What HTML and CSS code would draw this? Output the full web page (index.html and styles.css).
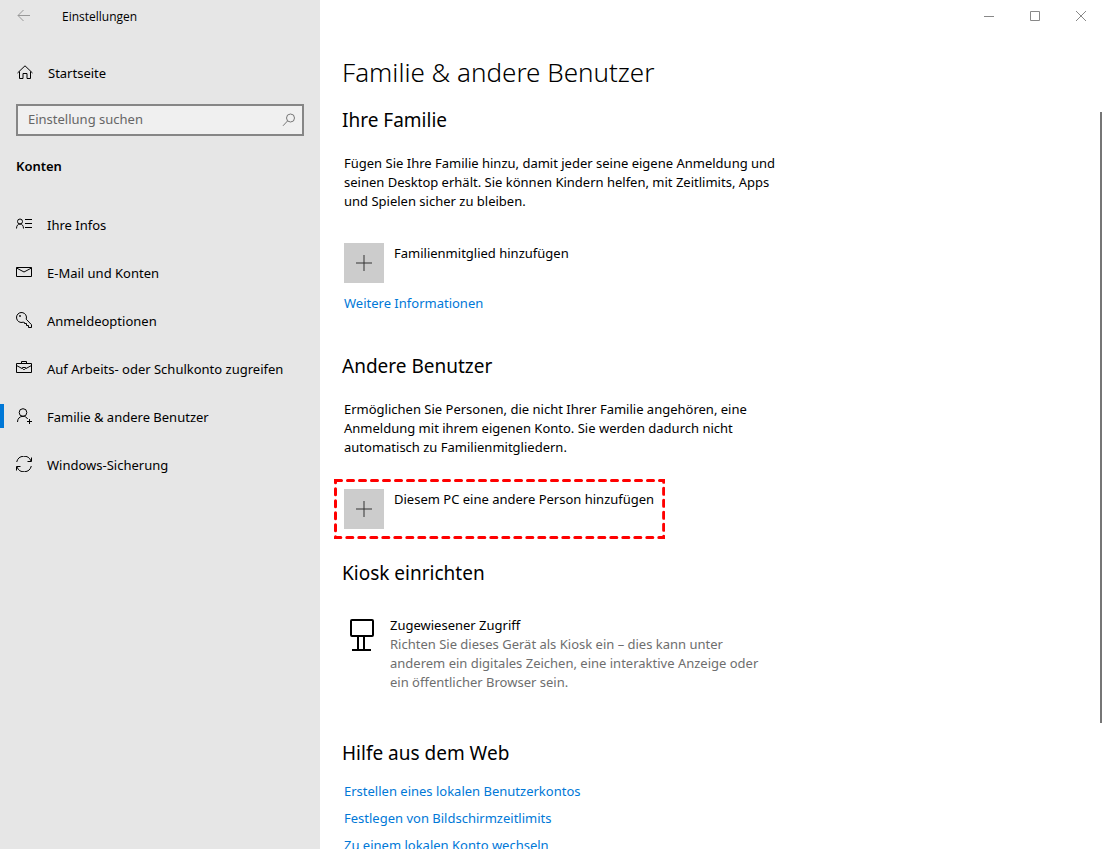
FILE: index.html
```html
<!DOCTYPE html>
<html lang="de">
  <head>
    <meta charset="UTF-8" />
    <meta name="viewport" content="width=device-width, initial-scale=1.0" />
    <title>Einstellungen</title>
    <link rel="stylesheet" href="styles.css">
  </head>
  <body>
    <div class="window">
      <aside class="sidebar">
        <header class="titlebar">
          <button class="back" aria-label="Zurück">
            <svg width="14" height="14" viewBox="0 0 14 14"><path d="M13 6.500H1M6.500 1L1 6.500 6.500 12" /></svg>
          </button>
          <span class="app-name">Einstellungen</span>
        </header>

        <a class="home" href="#">
          <svg class="icon" width="18" height="18" viewBox="0 0 18 18"><path d="M1.500 9L9 1.800 16.500 9M3.500 7.500v7h3.500v-5h4v5h3.500v-7" /></svg>
          Startseite
        </a>

        <form class="search">
          <input class="search-input" type="search" aria-label="Einstellung suchen" placeholder="Einstellung suchen">
          <button class="search-button" type="button" aria-label="Suchen">
            <svg width="14" height="14" viewBox="0 0 14 14"><circle cx="8.500" cy="5" r="4" /><path d="M5.600 7.900L1 12.800" /></svg>
          </button>
        </form>

        <h2 class="category">Konten</h2>

        <nav class="menu">
          <a class="menu-item" href="#">
            <svg class="icon" width="16" height="16" viewBox="0 0 16 16"><circle cx="4" cy="5.500" r="2.500" /><path d="M.5 12.500C.5 9.500 2 8 4 8s3.500 1.500 3.500 4.500M9 3.500h7M9 7.500h7M9 11.500h7" /></svg>
            <span>Ihre Infos</span>
          </a>
          <a class="menu-item" href="#">
            <svg class="icon" width="16" height="16" viewBox="0 0 16 16"><path d="M.5 3.500h15v9H.5zM.5 4L8 8l7.500-4" /></svg>
            <span>E-Mail und Konten</span>
          </a>
          <a class="menu-item" href="#">
            <svg class="icon" width="16" height="16" viewBox="0 0 16 16"><path d="M10.200 7.200a5 5 0 1 0-3 3l1.300.3v1h2v2h2v2h3v-2.800z" /><circle class="dot" cx="4" cy="4" r=".9" /></svg>
            <span>Anmeldeoptionen</span>
          </a>
          <a class="menu-item" href="#">
            <svg class="icon" width="16" height="16" viewBox="0 0 16 16"><path d="M.5 3.500h15v9H.5zM5.500 3.500v-2h5v2M.5 5.500L6 8.500M15.500 5.500L10 8.500M6.500 7.500h3v1l-1 1h-1l-1-1z" /></svg>
            <span>Auf Arbeits- oder Schulkonto zugreifen</span>
          </a>
          <a class="menu-item active" href="#">
            <svg class="icon" width="16" height="16" viewBox="0 0 16 16"><circle cx="7" cy="4.500" r="3.800" /><path d="M1.500 14c0-3.500 2.300-5.700 5.500-5.700 2.200 0 3.800 1 4.600 2.700M13.500 11v5M11 13.500h5" /></svg>
            <span>Familie &amp; andere Benutzer</span>
          </a>
          <a class="menu-item" href="#">
            <svg class="icon" width="16" height="16" viewBox="0 0 16 16"><path d="M.7 6A7.500 7.500 0 0 1 15 5M15.500 1.500v4h-4M15.300 10A7.500 7.500 0 0 1 1 11M.5 14.500v-4h4" /></svg>
            <span>Windows-Sicherung</span>
          </a>
        </nav>
      </aside>

      <main class="content">
        <div class="window-buttons">
          <button aria-label="Minimieren"><svg width="10" height="10" viewBox="0 0 10 10"><path d="M0 5.500h10" /></svg></button>
          <button aria-label="Maximieren"><svg width="10" height="10" viewBox="0 0 10 10"><path d="M.5.5h9v9h-9z" /></svg></button>
          <button aria-label="Schließen"><svg width="10" height="10" viewBox="0 0 10 10"><path d="M0 0l10 10M10 0L0 10" /></svg></button>
        </div>

        <h1>Familie &amp; andere Benutzer</h1>

        <section class="family">
          <h2>Ihre Familie</h2>
          <p>Fügen Sie Ihre Familie hinzu, damit jeder seine eigene Anmeldung und seinen Desktop erhält. Sie können Kindern helfen, mit Zeitlimits, Apps und Spielen sicher zu bleiben.</p>
          <button class="add">
            <span class="plus"><svg width="16" height="16" viewBox="0 0 16 16"><path d="M8 0v16M0 8h16" /></svg></span>
            <span class="add-label">Familienmitglied hinzufügen</span>
          </button>
          <a class="more" href="#">Weitere Informationen</a>
        </section>

        <section class="others">
          <h2>Andere Benutzer</h2>
          <p>Ermöglichen Sie Personen, die nicht Ihrer Familie angehören, eine Anmeldung mit ihrem eigenen Konto. Sie werden dadurch nicht automatisch zu Familienmitgliedern.</p>
          <button class="add">
            <span class="plus"><svg width="16" height="16" viewBox="0 0 16 16"><path d="M8 0v16M0 8h16" /></svg></span>
            <span class="add-label">Diesem PC eine andere Person hinzufügen</span>
            <svg class="marker"><rect x="1.500" y="1.500" /></svg>
          </button>
        </section>

        <section class="kiosk">
          <h2>Kiosk einrichten</h2>
          <a class="kiosk-link" href="#">
            <svg width="26" height="34" viewBox="0 0 26 34"><rect x="2" y="2" width="22" height="16" rx="1" /><path d="M9 18v14M15 18v14M3 32h19" /></svg>
            <span>
              <span class="kiosk-title">Zugewiesener Zugriff</span>
              <span class="kiosk-text">Richten Sie dieses Gerät als Kiosk ein – dies kann unter anderem ein digitales Zeichen, eine interaktive Anzeige oder ein öffentlicher Browser sein.</span>
            </span>
          </a>
        </section>

        <section class="help">
          <h2>Hilfe aus dem Web</h2>
          <a href="#">Erstellen eines lokalen Benutzerkontos</a>
          <a href="#">Festlegen von Bildschirmzeitlimits</a>
          <a href="#">Zu einem lokalen Konto wechseln</a>
        </section>

        <div class="scrollbar"></div>
      </main>
    </div>
  </body>
</html>
```

FILE: styles.css
```css
:root {
  --accent: #0078d7;
  --side: #e6e6e6;
  --tile: #cccccc;
  --muted: #6e6e6e;
}

* {
  box-sizing: border-box;
}

body {
  margin: 0;
  color: #000;
  background-color: #fff;
  font-family: "Noto Sans", "Open Sans", sans-serif;
  font-size: 13px;
  line-height: 19px;
}

h1,
h2,
p {
  margin: 0;
}

a {
  color: inherit;
  text-decoration: none;
}

button {
  border: none;
  padding: 0;
  background: none;
  color: inherit;
  font: inherit;
  cursor: pointer;
}

svg {
  display: block;
  flex: none;
  fill: none;
  stroke: currentColor;
}

.window {
  display: flex;
  height: 100vh;
  overflow: hidden;
}

/* sidebar */
.sidebar {
  flex: none;
  width: 320px;
  background-color: var(--side);
}

.titlebar {
  display: flex;
  align-items: center;
  height: 32px;
}

.back {
  display: flex;
  justify-content: center;
  width: 48px;
  color: #999;
}

.app-name {
  margin-left: 14px;
  font-family: "Open Sans", sans-serif;
  font-size: 12px;
}

.home {
  display: flex;
  align-items: center;
  gap: 14px;
  height: 48px;
  margin-top: 17px;
  padding-left: 16px;
}

.search {
  display: flex;
  height: 32px;
  margin: 7px 16px 0;
  border: 2px solid #868686;
  background-color: #f0f0f0;
}

.search-input {
  flex: 1;
  min-width: 0;
  border: none;
  outline: none;
  padding: 0 10px 2px;
  background: none;
  font: inherit;
}

.search-input::placeholder {
  color: #666;
  opacity: 1;
}

.search-button {
  display: flex;
  align-items: center;
  justify-content: center;
  width: 26px;
  color: #777;
}

.category {
  margin: 21px 16px 0;
  font-size: 13px;
  font-weight: 600;
}

.menu {
  margin-top: 24px;
}

.menu-item {
  display: flex;
  align-items: center;
  gap: 15px;
  height: 48px;
  padding-left: 16px;
}

.menu-item span {
  padding-top: 2px;
}

.active {
  background: linear-gradient(var(--accent), var(--accent)) left center / 4px 24px no-repeat;
}

.dot {
  fill: currentColor;
  stroke: none;
}

/* content */
.content {
  position: relative;
  flex: 1;
  min-width: 0;
  padding-left: 24px;
}

.window-buttons {
  display: flex;
  justify-content: flex-end;
  height: 32px;
  color: #888;
}

.window-buttons button {
  display: flex;
  align-items: center;
  justify-content: center;
  width: 46px;
}

h1 {
  margin: 22px 0 0 -2px;
  font-size: 26px;
  font-weight: 300;
  line-height: 36px;
}

.content h2 {
  margin-left: -2px;
  font-size: 19px;
  font-weight: 400;
  line-height: 28px;
}

.content p {
  max-width: 440px;
  margin-top: 20px;
}

.add {
  position: relative;
  display: flex;
  gap: 10px;
  margin-top: 32px;
}

.add-label {
  padding-top: 1px;
}

.plus {
  display: flex;
  align-items: center;
  justify-content: center;
  width: 40px;
  height: 40px;
  background-color: var(--tile);
  color: #333;
}

.marker {
  position: absolute;
  top: -10px;
  left: -10px;
  width: calc(100% + 21px);
  height: calc(100% + 20px);
  stroke: #f00;
  stroke-width: 3;
  stroke-dasharray: 6 6;
  stroke-linecap: round;
}

.marker rect {
  width: calc(100% - 3px);
  height: calc(100% - 3px);
}

.family {
  margin-top: 16px;
}

.more {
  display: block;
  margin-top: 11px;
  color: var(--accent);
}

.others {
  margin-top: 39px;
}

.kiosk {
  margin-top: 30px;
}

.kiosk-link {
  display: flex;
  gap: 15px;
  margin-top: 29px;
  padding-left: 5px;
}

.kiosk-link svg {
  margin-top: 2px;
  stroke-width: 2;
}

.kiosk-title,
.kiosk-text {
  display: block;
  max-width: 385px;
}

.kiosk-text {
  color: var(--muted);
}

.help {
  margin-top: 47px;
}

.help h2 {
  margin-bottom: 11px;
}

.help a {
  display: block;
  color: var(--accent);
  line-height: 27px;
}

.scrollbar {
  position: absolute;
  top: 112px;
  right: 2px;
  width: 2px;
  height: 72%;
  background-color: #767676;
}
```
